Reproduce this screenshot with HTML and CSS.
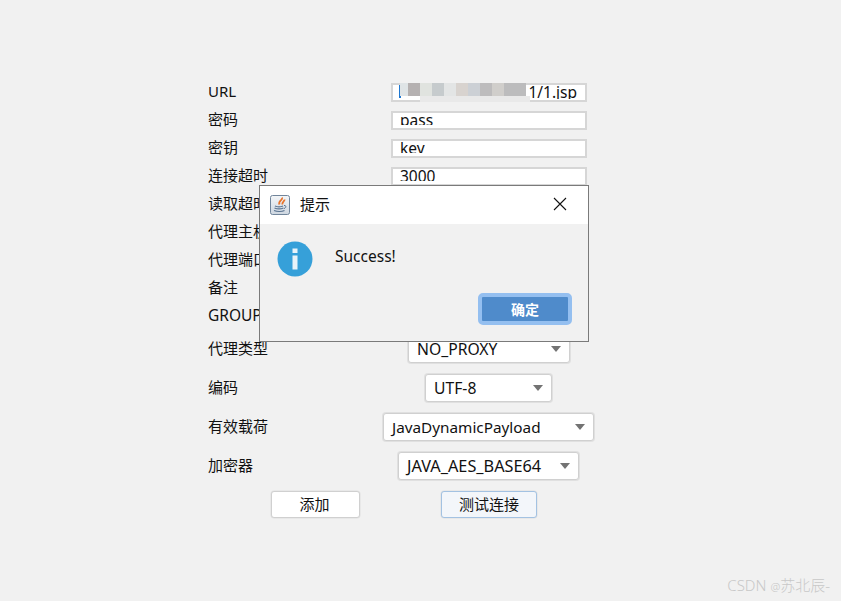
FILE: index.html
```html
<!DOCTYPE html>
<html lang="zh">
<head>
<meta charset="utf-8">
<title>Success</title>
<link rel="stylesheet" href="styles.css">
</head>
<body>
<main class="form">
  <div class="row"><span class="label">URL</span><div class="field url-field"><span class="caret"></span><span class="tail">1/1.jsp</span>
    <div class="mosaic">
      <div class="mosaic-top"><i class="m0"></i><i class="m1"></i><i class="m2"></i><i class="m3"></i><i class="m4"></i><i class="m5"></i><i class="m6"></i><i class="m7"></i><i class="m8"></i><i class="m9"></i></div>
      <div class="mosaic-low"></div>
    </div></div></div>
  <div class="row"><span class="label">密码</span><div class="field"><span class="clip">pass</span></div></div>
  <div class="row"><span class="label">密钥</span><div class="field"><span class="clip">key</span></div></div>
  <div class="row"><span class="label">连接超时</span><div class="field"><span class="clip">3000</span></div></div>
  <div class="row"><span class="label">读取超时</span><div class="field"><span class="clip">3000</span></div></div>
  <div class="row"><span class="label">代理主机</span><div class="field"></div></div>
  <div class="row"><span class="label">代理端口</span><div class="field"></div></div>
  <div class="row"><span class="label">备注</span><div class="field"></div></div>
  <div class="row"><span class="label latin">GROUP</span><div class="field"></div></div>
  <div class="row sel"><span class="label">代理类型</span><div class="select w164"><span>NO_PROXY</span><b class="arrow"></b></div></div>
  <div class="row sel"><span class="label">编码</span><div class="select w128"><span>UTF-8</span><b class="arrow"></b></div></div>
  <div class="row sel"><span class="label">有效载荷</span><div class="select w212"><span>JavaDynamicPayload</span><b class="arrow"></b></div></div>
  <div class="row sel"><span class="label">加密器</span><div class="select w182"><span>JAVA_AES_BASE64</span><b class="arrow"></b></div></div>
  <div class="actions">
    <button class="btn add">添加</button>
    <button class="btn test">测试连接</button>
  </div>
</main>

<section class="dialog">
  <header class="titlebar">
    <svg class="java" viewBox="0 0 20 20" width="20" height="20">
      <defs><linearGradient id="frame" x1="0" y1="0" x2="0" y2="1"><stop offset="0" stop-color="#f4f6f8"/><stop offset="1" stop-color="#cdd6e0"/></linearGradient></defs>
      <rect x="0.500" y="0.500" width="19" height="19" rx="2" fill="url(#frame)" stroke="#71859b"/>
      <path d="M12 2.500c1.500 2.500-4.500 3.500-2.500 7M14.500 4.500c.5 1.500-3 2.500-2 5" fill="none" stroke="#e8742c" stroke-width="1.800"/>
      <path d="M5 11c2 1 6 1 8 0M4.500 13c2.500 1 6.500 1 9 0M4 15.500c3 1.200 8 1.200 10.500 0" fill="none" stroke="#5a7390" stroke-width="1.300"/>
      <path d="M14 10.500c2.500-.5 2.500 2.500 0 3" fill="none" stroke="#5a7390"/>
    </svg>
    <span class="title">提示</span>
    <svg class="close" viewBox="0 0 14 14" width="14" height="14"><path d="M1 1l12 12M13 1L1 13" stroke="#111" stroke-width="1.100" fill="none"/></svg>
  </header>
  <div class="body">
    <div class="message">
      <svg class="info" viewBox="0 0 36 36" width="36" height="36">
        <circle cx="18" cy="18" r="17.500" fill="#36a0d9"/>
        <rect x="15.500" y="7.500" width="5" height="4.500" fill="#e8f3f9"/>
        <rect x="15.500" y="14.500" width="5" height="14" fill="#e8f3f9"/>
      </svg>
      <span class="msg-text">Success!</span>
    </div>
    <div class="dialog-actions"><button class="ok">确定</button></div>
  </div>
</section>

<div class="watermark">CSDN <span class="at">@</span>苏北辰-</div>
</body>
</html>
```

FILE: styles.css
```css
* { box-sizing: border-box; }
html, body { margin: 0; padding: 0; }
body {
  width: 841px;
  height: 601px;
  background: #f1f1f1;
  color: #111;
  font-family: "Noto Sans", "Noto Sans CJK SC", sans-serif;
  font-size: 15px;
  position: relative;
  overflow: hidden;
}
.form { width: 400px; margin-left: 208px; padding-top: 77px; }
.row { display: flex; height: 28px; align-items: center; }
.label { width: 183px; flex: none; line-height: 28px; }
.label.latin { font-size: 15.5px; }
.field {
  position: relative;
  width: 196px;
  height: 19px;
  margin-top: 2px;
  background: #fff;
  border: 2px solid #d6d6d6;
  overflow: hidden;
  line-height: 18px;
  padding-left: 7px;
  font-size: 15.5px;
}
.clip { display: block; height: 14px; overflow: hidden; margin-top: -2px; white-space: nowrap; padding-top: 0; }
.url-field { overflow: visible; }
.caret { position: absolute; left: 6px; top: 0; width: 2px; height: 13px; background: #1f78d1; }
.tail { position: absolute; right: 8px; top: -2px; height: 16px; overflow: hidden; }
.mosaic { position: absolute; left: 7px; top: -2px; width: 130px; }
.mosaic-top { display: flex; height: 13px; }
.mosaic-top i { display: block; width: 12px; }
.mosaic-low { height: 6px; margin-left: 20px; background: #e9e9e9; }
.mosaic-top .m0 { background: #dfe4e6; width: 8px; }
.mosaic-top .m1 { background: #b5b1b1; }
.m2 { background: #e0e3df; }
.m3 { background: #c6cbcd; }
.m4 { background: #e3e5e5; }
.m5 { background: #d8d3cf; }
.m6 { background: #ccd0d5; }
.m7 { background: #bdbcbd; }
.m8 { background: #d0cecb; }
.mosaic-top .m9 { background: #bcbcbd; width: 22px; }
.sel { height: 39px; position: relative; display: block; }
.sel .label { position: absolute; left: 0; top: 0; width: 181px; line-height: 39px; }
.select {
  position: absolute;
  top: 6px;
  height: 28px;
  background: #fff;
  border: 1px solid #d0d0d0;
  border-radius: 3px;
  display: flex;
  align-items: center;
  justify-content: space-between;
  padding: 0 8px 0 8px;
  font-size: 15.7px;
  box-shadow: 0 0 0 1px #e0e0e0;
}
.w164 { left: 200px; width: 162px; }
.w128 { left: 217px; width: 127px; }
.w212 { left: 175px; width: 211px; font-size: 15.3px; }
.w182 { left: 190px; width: 181px; font-size: 16.3px; }
.arrow {
  width: 0;
  height: 0;
  border-left: 5.500px solid transparent;
  border-right: 5.500px solid transparent;
  border-top: 6px solid #737373;
  flex: none;
}
.actions { display: flex; margin-left: 63px; gap: 81px; margin-top: 6px; }
.btn {
  height: 27px;
  background: #fff;
  border: 1px solid #d0d0d0;
  box-shadow: 0 0 0 0.500px #e0e0e0;
  border-radius: 3px;
  font: inherit;
  color: #111;
  padding: 0 2px 2px 0;
}
.add { width: 89px; }
.test { width: 96px; background: #f3f6fa; border-color: #a3c2e2; padding-right: 0; }
.dialog {
  position: absolute;
  left: 259px;
  top: 185px;
  width: 330px;
  height: 157px;
  background: #f1f1f1;
  border: 1px solid #7a7a7a;
  display: flex;
  flex-direction: column;
}
.titlebar {
  height: 38px;
  background: #fff;
  display: flex;
  align-items: center;
  padding: 0 21px 0 10px;
}
.java { margin-top: -1px; }
.title { margin-left: 10px; flex: 1; position: relative; top: -2px; }
.close { position: relative; top: -1px; }
.body { flex: 1; display: flex; flex-direction: column; justify-content: space-between; padding: 17px 16px 16px 17px; }
.message { display: flex; align-items: center; }
.msg-text { margin-left: 22px; font-size: 15.500px; margin-top: -6px; }
.dialog-actions { display: flex; justify-content: flex-end; }
.ok {
  width: 94px;
  height: 32px;
  background: #4f8bcb;
  color: #fff;
  border: 4px solid #94bff0;
  border-radius: 5px;
  font-family: inherit;
  font-size: 14px;
  font-weight: 700;
  padding: 0;
}
.watermark {
  position: absolute;
  right: 11px;
  bottom: 6px;
  color: #c8c8c8;
  font-size: 15px;
  font-weight: 300;
  white-space: nowrap;
}
.at { font-size: 11px; }
```
